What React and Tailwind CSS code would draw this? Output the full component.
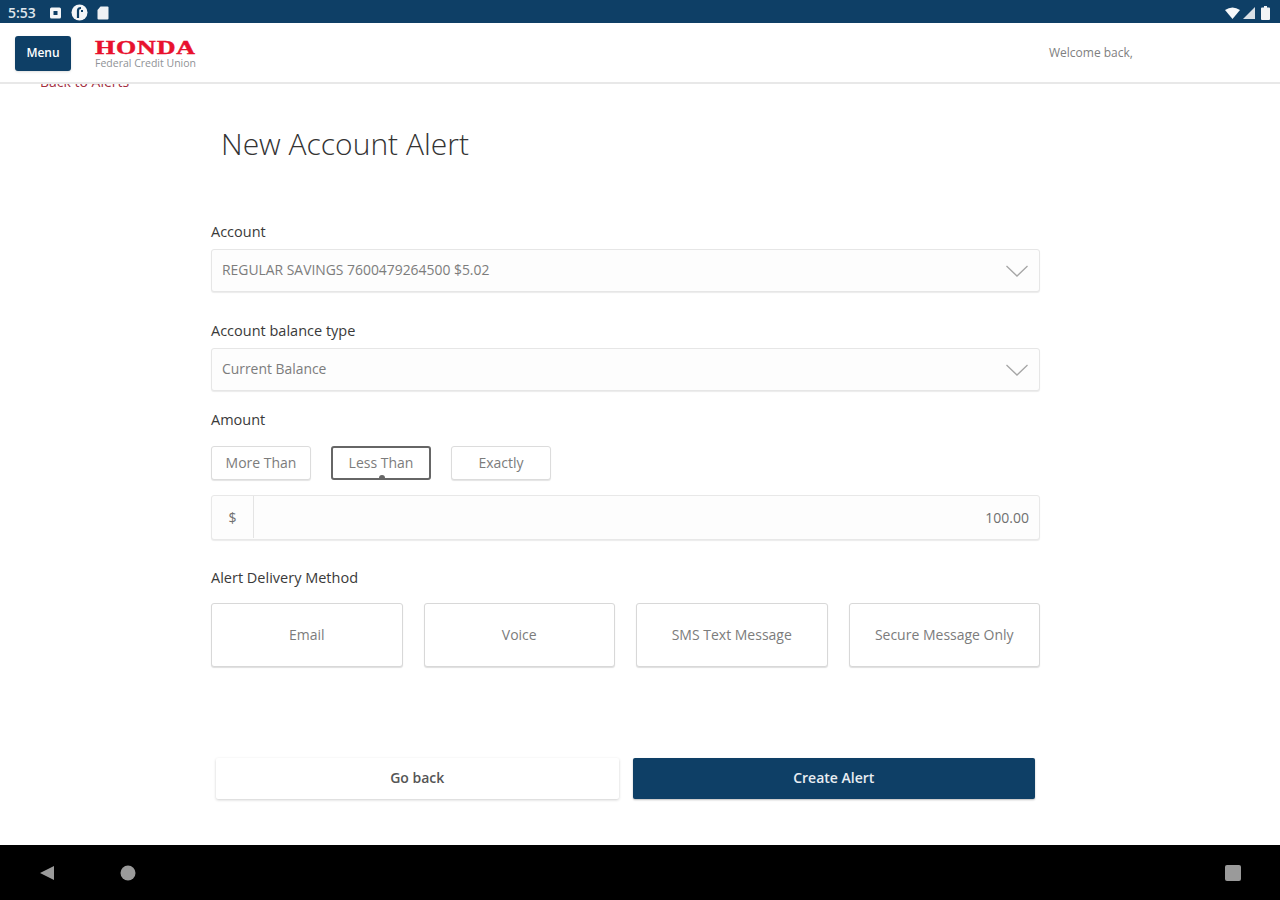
import React from 'react';

const navy = 'bg-[#0e3f66]';

function StatusBar() {
  return (
    <div className={`${navy} h-[23px] flex items-center justify-between pl-[8px] pr-[10px] pt-[2px] text-white shrink-0`}>
      <div className="flex items-center">
        <span className="text-[14px] font-semibold text-[#dfe6ec] w-[42px]">5:53</span>
        <svg width="11" height="12" viewBox="0 0 11 12" className="mr-[10px]">
          <rect x="0" y="0.5" width="11" height="11" rx="1.5" fill="#f4f6f8" />
          <rect x="3.5" y="4" width="4" height="4" fill="#0e3f66" />
        </svg>
        <svg width="17" height="17" viewBox="0 0 17 17" className="mr-[9px]">
          <circle cx="8.5" cy="8.5" r="8" fill="#f4f6f8" />
          <path d="M7 14V6.5Q7 4 10 4M10 7h2" stroke="#0e3f66" strokeWidth="2.2" fill="none" />
        </svg>
        <svg width="12" height="14" viewBox="0 0 12 14">
          <path d="M3.5 0.5H10.5a1 1 0 0 1 1 1V12.5a1 1 0 0 1-1 1H1.5a1 1 0 0 1-1-1V4Z" fill="#eef1f4" />
        </svg>
      </div>
      <div className="flex items-center gap-[3px]">
        <svg width="15" height="12" viewBox="0 0 15 12">
          <path d="M0 3Q7.5 -2 15 3L7.5 12Z" fill="#f6f8fa" />
        </svg>
        <svg width="12" height="12" viewBox="0 0 12 12">
          <path d="M12 0V12H0Z" fill="#d9e0e6" />
        </svg>
        <svg width="9" height="14" viewBox="0 0 9 14" className="ml-[3px]">
          <path d="M3 0H6V1.5H8a1 1 0 0 1 1 1V13a1 1 0 0 1-1 1H1a1 1 0 0 1-1-1V2.5a1 1 0 0 1 1-1H3Z" fill="#f2f4f6" />
        </svg>
      </div>
    </div>
  );
}

function Header() {
  return (
    <div className="relative z-10 h-[61px] bg-white border-b-2 border-[#e8e8e8] flex items-center pl-[15px] shrink-0">
      <button className={`${navy} w-[56px] h-[35px] rounded-[3px] text-white text-[12px] font-semibold shadow-sm mt-[1px]`}>
        Menu
      </button>
      <div className="ml-[24px] w-[110px] flex flex-col mt-[5px]">
        <span className="font-['Liberation_Serif',serif] font-bold text-[#e8112d] text-[18px] leading-[17px] tracking-[0.6px] [-webkit-text-stroke:0.4px_#e8112d] origin-left scale-x-[1.44]">
          HONDA
        </span>
        <span className="text-[10.5px] leading-[13px] text-[#8f9296]">Federal Credit Union</span>
      </div>
      <span className="absolute left-[1049px] top-[21px] text-[12px] text-[#808080]">Welcome back,</span>
    </div>
  );
}

function Label({ children, className = '' }) {
  return <div className={`text-[14.5px] leading-[18px] text-[#3a3a3a] ${className}`}>{children}</div>;
}

function SelectBox({ value }) {
  return (
    <div className="mt-[8px] h-[43px] bg-[#fdfdfd] border border-[#e6e6e6] rounded-[3px] shadow-[0_1px_1px_#ebebeb] flex items-center justify-between pl-[10px] pr-[10px]">
      <span className="text-[13.9px] text-[#7c7c7c] -mt-[1px]">{value}</span>
      <svg width="24" height="14" viewBox="0 0 24 14">
        <path d="M1.5 2L12 12L22.5 2" stroke="#a6a6a6" strokeWidth="1.3" fill="none" />
      </svg>
    </div>
  );
}

function Pill({ children, active }) {
  return (
    <button
      className={`relative w-[100px] h-[34px] pb-[2px] rounded-[3px] text-[14px] text-[#7c7c7c] bg-white ${
        active ? 'border-2 border-[#666]' : 'border border-[#dcdcdc] shadow-[0_1px_1px_#e4e4e4]'
      }`}
    >
      {children}
      {active && <span className="absolute left-[46px] bottom-0 w-[6px] h-[3px] rounded-t-full bg-[#666]" />}
    </button>
  );
}

function DeliveryOption({ children }) {
  return (
    <button className="h-[64px] pb-[2px] bg-white border border-[#d8d8d8] rounded-[3px] shadow-[0_1px_1px_#dedede] text-[14px] text-[#7c7c7c]">
      {children}
    </button>
  );
}

export default function App() {
  return (
    <div className="w-[1280px] h-[900px] flex flex-col bg-white overflow-hidden font-['Open_Sans',sans-serif]">
      <StatusBar />
      <Header />

      {/* link scrolled away under the header */}
      <div className="h-[5px] overflow-hidden pl-[40px] shrink-0">
        <div className="-mt-[10px] text-[14px] leading-[16px] text-[#a3303f]">Back to Alerts</div>
      </div>

      <main className="flex-1 w-[829px] ml-[211px]">
        <h1 className="ml-[10px] mt-[35px] text-[30px] leading-[40px] font-light text-[#333]">New Account Alert</h1>

        <Label className="mt-[59px]">Account</Label>
        <SelectBox value="REGULAR SAVINGS 7600479264500 $5.02" />

        <Label className="mt-[30px]">Account balance type</Label>
        <SelectBox value="Current Balance" />

        <Label className="mt-[20px]">Amount</Label>
        <div className="mt-[17px] flex gap-[20px]">
          <Pill>More Than</Pill>
          <Pill active>Less Than</Pill>
          <Pill>Exactly</Pill>
        </div>

        <div className="mt-[15px] h-[45px] pb-[1px] bg-[#fdfdfd] border border-[#e8e8e8] rounded-[3px] shadow-[0_1px_1px_#ececec] flex items-center text-[14px] text-[#707070]">
          <span className="w-[42px] h-full flex items-center justify-center border-r border-[#e4e4e4]">$</span>
          <span className="flex-1 text-right pr-[10px]">100.00</span>
        </div>

        <Label className="mt-[29px]">Alert Delivery Method</Label>
        <div className="mt-[16px] grid grid-cols-4 gap-[21px]">
          <DeliveryOption>Email</DeliveryOption>
          <DeliveryOption>Voice</DeliveryOption>
          <DeliveryOption>SMS Text Message</DeliveryOption>
          <DeliveryOption>Secure Message Only</DeliveryOption>
        </div>

        <div className="mt-[91px] ml-[5px] mr-[5px] flex gap-[14px]">
          <button className="flex-1 h-[41px] pb-[2px] bg-white rounded-[2px] shadow-[0_1px_3px_#cfcfcf] text-[14px] font-semibold text-[#555]">
            Go back
          </button>
          <button className={`flex-1 h-[41px] pb-[2px] ${navy} rounded-[2px] shadow-[0_1px_2px_#bbb] text-[14px] font-semibold text-[#e8edf2]`}>
            Create Alert
          </button>
        </div>
      </main>

      <div className="h-[55px] bg-black flex items-center shrink-0 relative">
        <svg width="16" height="16" viewBox="0 0 16 16" className="ml-[39px]">
          <path d="M15 1V15L1 8Z" fill="#9a9a9a" />
        </svg>
        <svg width="16" height="16" viewBox="0 0 16 16" className="ml-[65px]">
          <circle cx="8" cy="8" r="7.5" fill="#9a9a9a" />
        </svg>
        <div className="ml-auto mr-[39px] w-[16px] h-[16px] rounded-[2px] bg-[#9a9a9a]" />
      </div>
    </div>
  );
}
